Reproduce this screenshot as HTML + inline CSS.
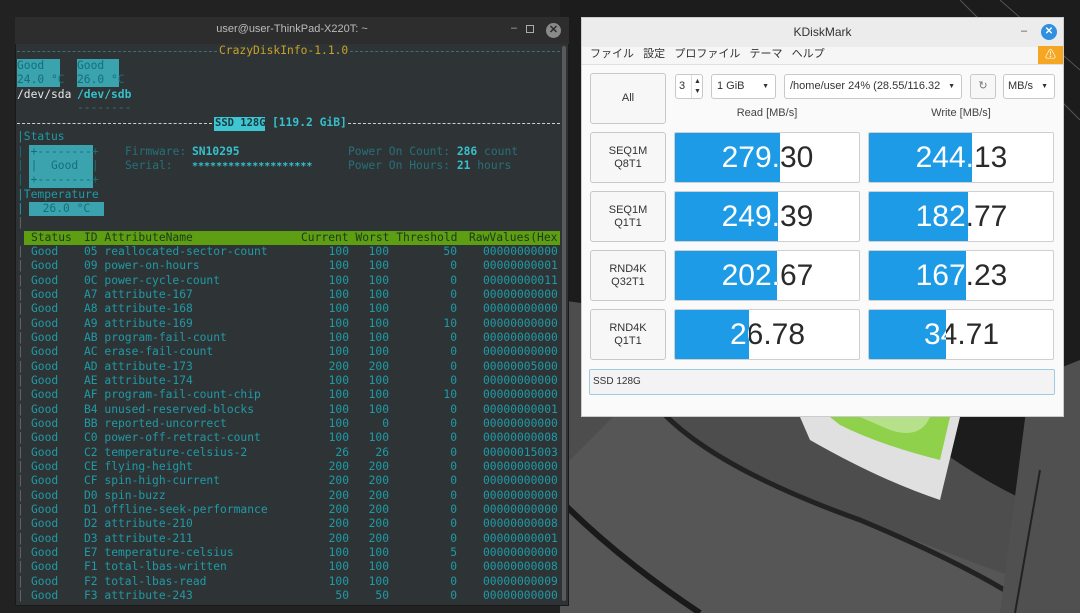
<!DOCTYPE html>
<html><head><meta charset="utf-8"><style>
*{margin:0;padding:0;box-sizing:border-box}
body{width:1080px;height:613px;overflow:hidden;background:#2a2a2a;position:relative;font-family:"Liberation Sans","Noto Sans CJK JP",sans-serif}
.a{position:absolute}
.m{font-family:"DejaVu Sans Mono","Liberation Mono",monospace;font-size:11.3px;line-height:14px;white-space:pre;color:#1f9aa6}
.r{text-align:right}
.btn{position:absolute;background:#f7f7f7;border:1px solid #c8c8c8;border-radius:3px;color:#333;font-size:11px;text-align:center}
.bar{position:absolute;background:#fff;border:1px solid #cfcfcf;border-radius:2px;overflow:hidden}
.bar .t{position:absolute;left:0;top:0;width:185px;height:50px;line-height:50px;text-align:center;font-size:30px;color:#2a2a2a}
.bar .f{position:absolute;left:0;top:0;height:50px;background:#1e9be6;overflow:hidden}
.bar .f .t{color:#fff}
.hd{color:#1d3a1a}
</style></head><body>
<svg class="a" style="left:0;top:0" width="1080" height="613">
<rect width="1080" height="613" fill="#222"/>
<path d="M560 0 L1080 0 L1080 613 L560 613Z" fill="#1c1c1c"/>
<path d="M560 300 Q780 330 900 420 Q1000 500 1080 520 L1080 613 L560 613Z" fill="#4d4d4d"/>
<path d="M640 390 Q700 470 840 510 Q960 560 1080 600 L1080 613 L560 613 L560 470Z" fill="#565656"/>
<path d="M560 500 Q620 560 700 613" stroke="#1a1a1a" stroke-width="6" fill="none"/>
<path d="M665 415 Q720 470 860 520 Q980 570 1040 613" stroke="#222" stroke-width="5" fill="none"/>
<path d="M1030 380 L1080 360 L1080 613 L1000 613Z" fill="#505050"/>
<path d="M800 417 L960 417 L940 500 Q880 480 810 440Z" fill="#e0e0e0"/>
<path d="M830 417 L950 417 L940 460 Q880 445 840 425Z" fill="#8fd14a"/>
<path d="M860 417 L930 417 Q920 440 890 430Z" fill="#b6e08a"/>
<path d="M960 0 L1080 120" stroke="#555" stroke-width="1"/>
<path d="M1000 0 L1080 70" stroke="#555" stroke-width="1"/>
<path d="M1040 470 L1015 613" stroke="#222" stroke-width="2"/>
</svg>

<!-- terminal -->
<div class="a" style="left:15px;top:17px;width:554px;height:589px;background:#2e3436;border:1px solid #1a1a1a"></div>
<div class="a" style="left:15px;top:17px;width:554px;height:27px;background:#2d2d2d"></div>
<div class="a" style="left:15px;top:23px;width:554px;text-align:center;font-size:11px;color:#bbb">user@user-ThinkPad-X220T: ~</div>
<div class="a" style="left:511px;top:22px;color:#aaa;font-size:11px">–</div>
<div class="a" style="left:526px;top:25px;width:8px;height:8px;border:1px solid #aaa"></div>
<div class="a" style="left:546px;top:23px;width:15px;height:15px;border-radius:50%;background:#8a8a8a;color:#2d2d2d;font-size:11px;line-height:15px;text-align:center;font-weight:bold">✕</div>
<div class="a" style="left:562px;top:46px;width:4px;height:555px;background:#5a5a5a;border-radius:2px"></div>

<div class="a" style="left:17px;top:51px;width:200px;border-top:1px dashed #3b6e75"></div>
<div class="a" style="left:350px;top:51px;width:210px;border-top:1px dashed #3b6e75"></div>
<div class="a m" style="left:219px;top:44px;color:#c9a227">CrazyDiskInfo-1.1.0</div>
<div class="a" style="left:17px;top:59px;width:43px;height:28px;background:#3aa3ae"></div>
<div class="a" style="left:77px;top:59px;width:42px;height:28px;background:#3aa3ae"></div>
<div class="a m" style="left:17px;top:59px;color:#166e78">Good
24.0 °C</div>
<div class="a m" style="left:77px;top:59px;color:#166e78">Good
26.0 °C</div>
<div class="a m" style="left:17px;top:88px;color:#e8e8e8">/dev/sda</div>
<div class="a m" style="left:77px;top:88px;color:#35c0cc;font-weight:bold">/dev/sdb</div>
<div class="a m" style="left:77px;top:101px;color:#3b6e75">--------</div>
<div class="a" style="left:17px;top:123px;width:195px;border-top:1px dashed #cfcfcf"></div>
<div class="a" style="left:348px;top:123px;width:212px;border-top:1px dashed #cfcfcf"></div>
<div class="a" style="left:214px;top:117px;width:51px;height:14px;background:#3ec6d2"></div>
<div class="a m" style="left:215px;top:116px;color:#1e3a3e;font-weight:bold;font-size:10.5px">SSD 128G</div>
<div class="a m" style="left:272px;top:116px;color:#35c0cc;font-weight:bold">[119.2 GiB]</div>
<div class="a m" style="left:17px;top:130px">|Status</div>
<div class="a" style="left:29px;top:145px;width:64px;height:43px;background:#3aa3ae"></div>
<div class="a m" style="left:17px;top:145px;color:#166e78">| +--------+
| |  Good  |
| +--------+</div>
<div class="a m" style="left:17px;top:188px">|Temperature
|</div>
<div class="a" style="left:29px;top:202px;width:75px;height:14px;background:#3aa3ae"></div>
<div class="a m" style="left:29px;top:202px;color:#166e78">  26.0 °C</div>
<div class="a m" style="left:17px;top:216px;color:#666">|</div>
<div class="a m" style="left:125px;top:145px;color:#26707a">Firmware:
Serial:</div>
<div class="a m" style="left:192px;top:145px;color:#35c0cc;font-weight:bold">SN10295
<span style="font-size:10px">********************</span></div>
<div class="a m" style="left:348px;top:145px;color:#26707a">Power On Count: <b style="color:#35c0cc">286</b> count
Power On Hours: <b style="color:#35c0cc">21</b> hours</div>
<div class="a" style="left:24px;top:231px;width:536px;height:14px;background:#5d9e12"></div>
<div class="a m hd" style="left:31px;top:231px">Status</div>
<div class="a m hd" style="left:84px;top:231px">ID AttributeName</div>
<div class="a m hd" style="left:301px;top:231px">Current Worst Threshold</div>
<div class="a m hd" style="left:469px;top:231px;width:91px;overflow:hidden">RawValues(Hex</div>

<div id="rows"></div>
<script>
var d=[["05","reallocated-sector-count",100,100,50,"00000000000"],["09","power-on-hours",100,100,0,"00000000001"],["0C","power-cycle-count",100,100,0,"00000000011"],["A7","attribute-167",100,100,0,"00000000000"],["A8","attribute-168",100,100,0,"00000000000"],["A9","attribute-169",100,100,10,"00000000000"],["AB","program-fail-count",100,100,0,"00000000000"],["AC","erase-fail-count",100,100,0,"00000000000"],["AD","attribute-173",200,200,0,"00000005000"],["AE","attribute-174",100,100,0,"00000000000"],["AF","program-fail-count-chip",100,100,10,"00000000000"],["B4","unused-reserved-blocks",100,100,0,"00000000001"],["BB","reported-uncorrect",100,0,0,"00000000000"],["C0","power-off-retract-count",100,100,0,"00000000008"],["C2","temperature-celsius-2",26,26,0,"00000015003"],["CE","flying-height",200,200,0,"00000000000"],["CF","spin-high-current",200,200,0,"00000000000"],["D0","spin-buzz",200,200,0,"00000000000"],["D1","offline-seek-performance",200,200,0,"00000000000"],["D2","attribute-210",200,200,0,"00000000008"],["D3","attribute-211",200,200,0,"00000000001"],["E7","temperature-celsius",100,100,5,"00000000000"],["F1","total-lbas-written",100,100,0,"00000000008"],["F2","total-lbas-read",100,100,0,"00000000009"],["F3","attribute-243",50,50,0,"00000000000"]];
var h="";d.forEach(function(r,i){var t=245+i*14.33;
h+='<div class="a m" style="left:17px;top:'+t+'px;color:#666">|</div>'+
'<div class="a m" style="left:31px;top:'+t+'px">Good</div>'+
'<div class="a m" style="left:84px;top:'+t+'px">'+r[0]+' '+r[1]+'</div>'+
'<div class="a m r" style="left:300px;width:49px;top:'+t+'px">'+r[2]+'</div>'+
'<div class="a m r" style="left:340px;width:49px;top:'+t+'px">'+r[3]+'</div>'+
'<div class="a m r" style="left:400px;width:57px;top:'+t+'px">'+r[4]+'</div>'+
'<div class="a m" style="left:483px;top:'+t+'px">'+r[5]+'</div>';});
document.getElementById("rows").innerHTML=h;
</script>

<!-- KDiskMark -->
<div class="a" style="left:581px;top:17px;width:483px;height:400px;background:#fafafa;border:1px solid #ccc"></div>
<div class="a" style="left:582px;top:18px;width:481px;height:29px;background:#ececec"></div>
<div class="a" style="left:582px;top:25px;width:481px;text-align:center;font-size:12px;color:#333">KDiskMark</div>
<div class="a" style="left:1021px;top:25px;font-size:11px;color:#555">–</div>
<div class="a" style="left:1041px;top:24px;width:16px;height:16px;border-radius:50%;background:#2f8fe0;color:#fff;font-size:10px;line-height:16px;text-align:center;font-weight:bold">✕</div>
<div class="a" style="left:582px;top:47px;width:481px;height:18px;background:#f6f6f6;border-bottom:1px solid #e0e0e0"></div>
<div class="a" style="left:590px;top:47px;font-size:11px;color:#333;white-space:pre;line-height:14px">ファイル   設定   プロファイル   テーマ   ヘルプ</div>
<div class="a" style="left:1038px;top:46px;width:25px;height:18px;background:#f5a623;color:#fff;font-size:11px;text-align:center;line-height:18px">⚠</div>

<div class="btn" style="left:590px;top:73px;width:76px;height:51px;line-height:49px">All</div>
<div class="btn" style="left:675px;top:74px;width:28px;height:25px;background:#fff;font-size:11px;line-height:23px;text-align:left;padding-left:3px">3<span style="position:absolute;left:15px;top:0;width:1px;height:23px;background:#ddd"></span><span style="position:absolute;left:18px;top:-5px;font-size:7px">▲</span><span style="position:absolute;left:18px;top:5px;font-size:7px">▼</span></div>
<div class="btn" style="left:711px;top:74px;width:65px;height:25px;line-height:23px;text-align:left;padding-left:5px;background:#fff">1 GiB<span style="position:absolute;right:6px;font-size:7px">▼</span></div>
<div class="btn" style="left:784px;top:74px;width:178px;height:25px;line-height:23px;text-align:left;padding-left:5px;background:#fff">/home/user 24% (28.55/116.32<span style="position:absolute;right:6px;font-size:7px">▼</span></div>
<div class="btn" style="left:970px;top:74px;width:26px;height:25px;line-height:23px;color:#777">↻</div>
<div class="btn" style="left:1003px;top:74px;width:52px;height:25px;line-height:23px;text-align:left;padding-left:4px;background:#fff">MB/s<span style="position:absolute;right:6px;font-size:7px">▼</span></div>
<div class="a" style="left:674px;top:107px;width:186px;text-align:center;font-size:11px;color:#444">Read [MB/s]</div>
<div class="a" style="left:868px;top:107px;width:186px;text-align:center;font-size:11px;color:#444">Write [MB/s]</div>

<div class="btn" style="left:590px;top:132px;width:76px;height:51px;padding-top:12px;line-height:13px">SEQ1M<br>Q8T1</div>
<div class="btn" style="left:590px;top:191px;width:76px;height:51px;padding-top:12px;line-height:13px">SEQ1M<br>Q1T1</div>
<div class="btn" style="left:590px;top:250px;width:76px;height:51px;padding-top:12px;line-height:13px">RND4K<br>Q32T1</div>
<div class="btn" style="left:590px;top:309px;width:76px;height:51px;padding-top:12px;line-height:13px">RND4K<br>Q1T1</div>

<div class="bar" style="left:674px;top:132px;width:186px;height:51px"><div class="t">279.30</div><div class="f" style="width:105px"><div class="t">279.30</div></div></div>
<div class="bar" style="left:868px;top:132px;width:186px;height:51px"><div class="t">244.13</div><div class="f" style="width:103px"><div class="t">244.13</div></div></div>
<div class="bar" style="left:674px;top:191px;width:186px;height:51px"><div class="t">249.39</div><div class="f" style="width:103px"><div class="t">249.39</div></div></div>
<div class="bar" style="left:868px;top:191px;width:186px;height:51px"><div class="t">182.77</div><div class="f" style="width:99px"><div class="t">182.77</div></div></div>
<div class="bar" style="left:674px;top:250px;width:186px;height:51px"><div class="t">202.67</div><div class="f" style="width:102px"><div class="t">202.67</div></div></div>
<div class="bar" style="left:868px;top:250px;width:186px;height:51px"><div class="t">167.23</div><div class="f" style="width:97px"><div class="t">167.23</div></div></div>
<div class="bar" style="left:674px;top:309px;width:186px;height:51px"><div class="t">26.78</div><div class="f" style="width:74px"><div class="t">26.78</div></div></div>
<div class="bar" style="left:868px;top:309px;width:186px;height:51px"><div class="t">34.71</div><div class="f" style="width:77px"><div class="t">34.71</div></div></div>

<div class="a" style="left:589px;top:369px;width:466px;height:26px;background:#f3f3f3;border:1px solid #9fcbe0;border-radius:2px;font-size:10px;color:#333;line-height:24px;padding-left:3px">SSD 128G</div>
</body></html>
